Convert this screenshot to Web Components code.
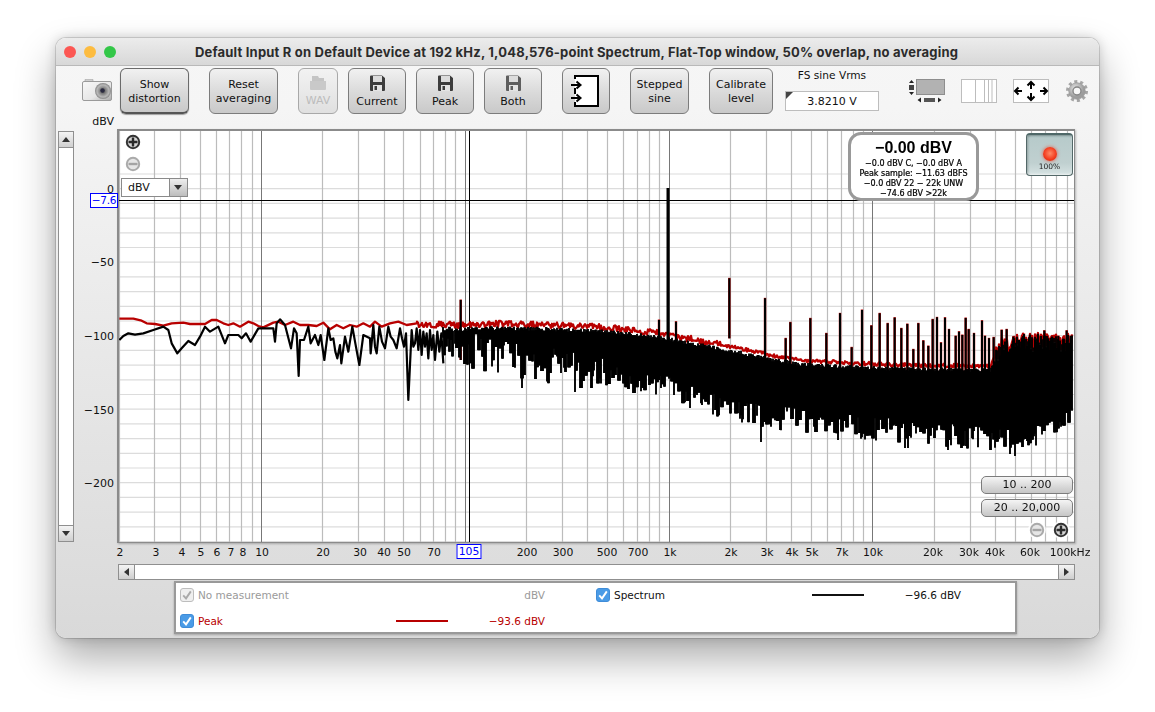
<!DOCTYPE html>
<html lang="en"><head><meta charset="utf-8"><title>Spectrum</title>
<style>
html,body{margin:0;background:#fff}
body{padding:38px 56px 0;height:712px;box-sizing:border-box;overflow:hidden;font-family:"DejaVu Sans",sans-serif;font-size:11px;color:#111}
</style></head><body>
<app-window>
  <title-bar slot="title">Default Input R on Default Device at 192 kHz, 1,048,576-point Spectrum, Flat-Top window, 50% overlap, no averaging</title-bar>
  <tool-bar slot="tools"></tool-bar>
  <main-area slot="main"></main-area>
</app-window>
<script>
function def(name,css,html,init){
  customElements.define(name,class extends HTMLElement{
    connectedCallback(){
      if(this.shadowRoot)return;
      const r=this.attachShadow({mode:'open'});
      r.innerHTML='<style>'+css+'</style>'+(typeof html==='function'?html(this):html);
      if(init)init(r,this);
    }
  });
}
const ICON={
 floppy:c=>`<svg width="15" height="16" viewBox="0 0 15 16"><path d="M0 1.5A1 1 0 0 1 1 .5H12L15 3V15A1 1 0 0 1 14 16H1A1 1 0 0 1 0 15Z" fill="${c}"/><rect x="3" y="1" width="9" height="6" fill="#dcdcdc"/><rect x="3" y="10" width="9" height="6" fill="#e4e4e4"/><rect x="4.5" y="11" width="2.5" height="4" fill="${c}"/></svg>`,
 folder:`<svg width="16" height="15" viewBox="0 0 16 15"><path d="M2 1H8L9 3H14V6H2Z" fill="#c4c4c4"/><path d="M0 6H16V14A1 1 0 0 1 15 15H1A1 1 0 0 1 0 14Z" fill="#c9c9c9"/></svg>`
};
def('title-bar',`:host{display:flex;align-items:center;height:27px;border-bottom:1px solid #b9b9b9;background:linear-gradient(#ececec,#d8d8d8);border-radius:10px 10px 0 0;position:relative}
 .lights{display:flex;gap:8px;padding-left:8px}
 i{display:block;width:12px;height:12px;border-radius:50%}
 .t{flex:1;text-align:center;font:700 13px Inter,sans-serif;letter-spacing:.2px;color:#2b2b2b;padding-right:62px;white-space:nowrap}`,
 `<div class="lights"><i style="background:#fc5753"></i><i style="background:#fdbc40"></i><i style="background:#33c748"></i></div><div class="t"><slot></slot></div>`);

def('app-window',`:host{display:block;width:1043px;height:600px;border-radius:10px;background:linear-gradient(#f6f6f6 0,#f5f5f5 70px,#d9d9d9 100%);box-shadow:0 0 0 1px rgba(0,0,0,.13),0 20px 40px rgba(0,0,0,.33),0 0 12px rgba(0,0,0,.18)}`,`<slot name="title"></slot><slot name="tools"></slot><slot name="main"></slot>`);

def('tool-button',`:host{display:flex;flex:none;flex-direction:column;align-items:center;justify-content:center;box-sizing:border-box;height:46px;padding-top:2px;border:1px solid #7c7c7c;border-radius:6px;background:linear-gradient(#f1f1f1,#d9d9d9 55%,#c9c9c9);text-align:center;line-height:14px;font-size:11px;color:#111}
 :host([primary]){border-color:#6b6b6b;border-bottom:2px solid #555;box-shadow:0 1px 1px rgba(0,0,0,.35)}
 :host([disabled]){color:#bcbcbc;border-color:#a8a8a8;background:linear-gradient(#f2f2f2,#e0e0e0)}
 ::slotted(svg){margin:-1px 0 4px}`,`<slot></slot>`);

def('fs-field',`:host{display:block;width:94px;flex:none;margin-left:12px;text-align:center;font-size:11px}
 .l{height:23px;line-height:14px;box-sizing:border-box;white-space:nowrap;font-size:10.6px}
 .v{position:relative;box-sizing:border-box;height:20px;border:1px solid #bdbdbd;background:#fff;line-height:20px;font-size:11px}
 .v::before{content:"";position:absolute;left:0;top:0;border-style:solid;border-width:7px 7px 0 0;border-color:#444 transparent transparent transparent}`,
 `<div class="l">FS sine Vrms</div><div class="v">3.8210 V</div>`);

def('tool-bar',`:host{display:flex;align-items:flex-start;height:46px;padding-top:2px}
 .s{flex:none}`,
 `<svg class="s" style="margin:11px 0 0 26px" width="30" height="22" viewBox="0 0 30 22">
   <defs><linearGradient id="cb" x1="0" x2="1" y1="0" y2="1"><stop offset="0" stop-color="#f8f8f8"/><stop offset=".6" stop-color="#e6e6e6"/><stop offset="1" stop-color="#a9a9a9"/></linearGradient>
   <radialGradient id="cl"><stop offset="0" stop-color="#333"/><stop offset=".3" stop-color="#777"/><stop offset=".75" stop-color="#b8b8b8"/><stop offset="1" stop-color="#858585"/></radialGradient></defs>
   <rect x="3" y="0" width="8" height="3" rx="1" fill="#cfcfcf" stroke="#9c9c9c" stroke-width=".6"/>
   <rect x=".5" y="2.5" width="29" height="19" rx="1.5" fill="url(#cb)" stroke="#9a9a9a"/>
   <circle cx="21" cy="12" r="8" fill="url(#cl)"/><circle cx="20.5" cy="11.5" r="2.2" fill="#2a2a40"/>
  </svg>
  <tool-button primary style="margin-left:8px;width:69px">Show<br>distortion</tool-button>
  <tool-button style="margin-left:20px;width:69px">Reset<br>averaging</tool-button>
  <tool-button disabled style="margin-left:20px;width:40px">${ICON.folder}WAV</tool-button>
  <tool-button style="margin-left:10px;width:58px">${ICON.floppy('#3d3d3d')}Current</tool-button>
  <tool-button style="margin-left:10px;width:58px">${ICON.floppy('#3d3d3d')}Peak</tool-button>
  <tool-button style="margin-left:10px;width:58px">${ICON.floppy('#5e5e5e')}Both</tool-button>
  <tool-button style="margin-left:20px;width:48px"><svg style="margin:-2px 0 0" width="32" height="32" viewBox="0 0 32 32">
    <path d="M5 4V1H28V31H5V27M5 19V13" fill="#fff" stroke="#000" stroke-width="2"/><rect x="6" y="2" width="21" height="28" fill="#fff"/>
    <path d="M1 10H10M6.5 6.5L10.5 10L6.5 13.5M1 23H10M6.5 19.5L10.5 23L6.5 26.5" fill="none" stroke="#000" stroke-width="2"/></svg></tool-button>
  <tool-button style="margin-left:20px;width:59px">Stepped<br>sine</tool-button>
  <tool-button style="margin-left:20px;width:64px">Calibrate<br>level</tool-button>
  <fs-field></fs-field>
  <svg class="s" style="margin:10px 0 0 29px" width="37" height="26" viewBox="0 0 37 26">
   <rect x="8.5" y="1.5" width="28" height="15" fill="#b2b2b2" stroke="#8e8e8e"/>
   <rect x="1" y="7" width="5" height="5" fill="#444"/><path d="M1 5L3.5 2L6 5ZM1 14L3.5 17L6 14Z" fill="#222"/>
   <rect x="16" y="20" width="11" height="4" fill="#555"/><path d="M13 19.5L9.5 22L13 24.5ZM30 19.5L33.5 22L30 24.5Z" fill="#222"/>
  </svg>
  <svg class="s" style="margin:11px 0 0 16px" width="36" height="24" viewBox="0 0 36 24">
   <rect x=".5" y=".5" width="35" height="23" fill="#fff" stroke="#bdbdbd"/><path d="M14.5 1V23M23.5 1V23M27.5 1V23M31 1V23" stroke="#bdbdbd"/>
  </svg>
  <svg class="s" style="margin:11px 0 0 16px" width="36" height="24" viewBox="0 0 36 24">
   <rect x=".5" y=".5" width="35" height="23" fill="#fff" stroke="#bdbdbd"/>
   <g fill="none" stroke="#000" stroke-width="2"><path d="M2 12H9M5.5 8.5L2 12L5.5 15.5M34 12H27M30.5 8.5L34 12L30.5 15.5M18 3V10M14.5 6.5L18 3L21.5 6.5M18 21V14M14.5 17.5L18 21L21.5 17.5"/></g>
  </svg>
  <svg class="s" style="margin:12px 0 0 17px" width="22" height="22" viewBox="0 0 22 22">
   <defs><radialGradient id="g" cx=".4" cy=".35"><stop offset="0" stop-color="#e8e8e8"/><stop offset="1" stop-color="#9c9c9c"/></radialGradient></defs>
   <circle cx="11" cy="11" r="9.4" fill="none" stroke="#a6a6a6" stroke-width="3.2" stroke-dasharray="3 2.9"/>
   <circle cx="11" cy="11" r="8.3" fill="url(#g)" stroke="#969696" stroke-width=".6"/>
   <circle cx="11" cy="11" r="4" fill="#f7f7f7" stroke="#858585" stroke-width="1.4"/>
  </svg>`);

def('scroll-btn',`:host{display:flex;flex:none;align-items:center;justify-content:center;box-sizing:border-box;background:linear-gradient(#f4f4f4,#cfcfcf)}
 i{display:block;width:0;height:0;border-style:solid}
 :host([dir=up]) i{border-width:0 4.5px 5px;border-color:transparent transparent #333}
 :host([dir=down]) i{border-width:5px 4.5px 0;border-color:#333 transparent transparent}
 :host([dir=left]) i{border-width:4.5px 5px 4.5px 0;border-color:transparent #333 transparent transparent}
 :host([dir=right]) i{border-width:4.5px 0 4.5px 5px;border-color:transparent transparent transparent #333}`,`<i></i>`);

def('v-scroll',`:host{display:flex;flex-direction:column;box-sizing:border-box;width:16px;border:1px solid #8f8f8f;background:#fff;margin:2px 0 1px 2px}
 .t{flex:1;border:solid #8f8f8f;border-width:1px 0}
 scroll-btn{height:15px}`,`<scroll-btn dir="up"></scroll-btn><div class="t"></div><scroll-btn dir="down"></scroll-btn>`);

def('h-scroll',`:host{display:flex;box-sizing:border-box;height:16px;width:957px;margin-left:1px;border:1px solid #8f8f8f;background:#fff}
 .t{flex:1;border:solid #8f8f8f;border-width:0 1px}
 scroll-btn{width:15px}`,`<scroll-btn dir="left"></scroll-btn><div class="t"></div><scroll-btn dir="right"></scroll-btn>`);

/* axis labels are placed along a scale, so their position is the data */
def('y-axis',`:host{display:block;position:relative;font-size:11px}
 span{position:absolute;right:3px;line-height:14px;white-space:nowrap}
 .c{right:-1px;top:64px;width:28px;height:15px;line-height:13px;box-sizing:border-box;border:1px solid #00f;background:#fff;color:#00f;text-align:center;z-index:3;letter-spacing:-.3px;font-size:10.5px}`,
 ()=>[[ '0',190],['−50',263],['−100',337],['−150',411],['−200',484]].map(([t,y])=>`<span style="top:${y-129-7}px">${t}</span>`).join('')+`<span class="c">−7.6</span>`);

const XT=[['2',120],['3',156],['4',182],['5',201],['6',217],['7',231],['8',243],['10',262],['20',323],['30',360],['40',384],['50',404],['70',434],['200',527],['300',563],['500',607],['700',638],['1k',670],['2k',731],['3k',767],['4k',792],['5k',812],['7k',842],['10k',873],['20k',933],['30k',969],['40k',995],['60k',1030],['100kHz',1070]];
def('x-axis',`:host{display:block;position:relative;font-size:10.8px;width:958px}
 span{position:absolute;top:3px;line-height:14px;transform:translateX(-50%);white-space:nowrap}
 .c{top:1px;width:25px;height:15px;box-sizing:border-box;border:1px solid #00f;color:#00f;background:#fff;text-align:center;line-height:13px}`,
 ()=>XT.map(([t,x])=>`<span style="left:${x-117}px">${t}</span>`).join('')+`<span class="c" style="left:${469-117}px">105</span>`);

def('zoom-btn',`:host{display:block;position:absolute;width:18px;height:18px}`,
 h=>{const plus=h.hasAttribute('plus'),dim=h.hasAttribute('dim');
  return `<svg width="18" height="18" viewBox="0 0 18 18"><circle cx="9" cy="9" r="9" fill="#fff" opacity=".85"/><circle cx="9" cy="9" r="6.2" fill="${dim?'#e6e6e6':'#d6d6d6'}" stroke="${dim?'#aaa':'#333'}" stroke-width="2"/><path d="M4.5 9H13.5${plus?'M9 4.5V13.5':''}" stroke="${dim?'#a4a4a4':'#2a2a2a'}" stroke-width="2.4"/></svg>`});

def('range-btn',`:host{display:block;position:absolute;box-sizing:border-box;width:92px;height:18px;border:1px solid #7c7c7c;border-radius:5px;background:linear-gradient(#f5f5f5,#d8d8d8 60%,#c6c6c6);text-align:center;line-height:16px;font-size:11px}`,`<slot></slot>`);

def('unit-combo',`:host{display:flex;position:absolute;box-sizing:border-box;width:67px;height:19px;border:1px solid #8a8a8a;background:#fff;font-size:11px;line-height:17px}
 .t{flex:1;padding-left:6px}
 .a{width:17px;border-left:1px solid #8a8a8a;background:linear-gradient(#eee,#bdbdbd);position:relative}
 .a::after{content:"";position:absolute;left:3.5px;top:6px;border-style:solid;border-width:5px 4.5px 0;border-color:#333 transparent transparent}`,
 `<div class="t">dBV</div><div class="a"></div>`);

def('status-box',`:host{display:block;position:absolute;box-sizing:border-box;width:131px;height:69px;border:3px solid #999;border-radius:13px;background:#fff;text-align:center;color:#000;font-size:8px;line-height:10.1px;-webkit-text-stroke:.22px #000;white-space:nowrap}
 .b{font:700 16px/18px "Liberation Sans",sans-serif;-webkit-text-stroke:0;margin:4px 0 2px}`,
 `<div class="b">−0.00 dBV</div><div>−0.0 dBV C, −0.0 dBV A</div><div>Peak sample: −11.63 dBFS</div><div>−0.0 dBV 22 − 22k UNW</div><div>−74.6 dBV &gt;22k</div>`);

def('led-box',`:host{display:block;position:absolute;box-sizing:border-box;width:47px;height:43px;border:1px solid #536868;border-top:2px solid #4f6868;border-radius:4px;background:linear-gradient(#b6caca,#c0d0d0 70%,#d6e2e2);text-align:center;font-size:7.5px;color:#222;box-shadow:inset 0 -1px 2px rgba(255,255,255,.6),inset 1px 1px 2px rgba(60,80,80,.5)}
 i{display:block;width:14px;height:14px;border-radius:50%;margin:12px auto 1px;background:radial-gradient(circle at 50% 45%,#ff8a66,#f2391b 60%,#c9240f);box-shadow:0 0 3px 1px rgba(230,90,70,.55)}
 div{line-height:9px}`,`<i></i><div>100%</div>`);

function mulberry(a){return()=>{a|=0;a=a+0x6D2B79F5|0;let t=Math.imul(a^a>>>15,1|a);t=t+Math.imul(t^t>>>7,61|t)^t;return((t^t>>>14)>>>0)/4294967296}}
function lerp(A,x){if(x<=A[0][0])return A[0][1];for(let i=1;i<A.length;i++){if(x<=A[i][0]){const[a,b]=A[i-1],[c,d]=A[i];return b+(d-b)*(x-a)/(c-a)}}return A[A.length-1][1]}

function drawPlot(cv){
  const g=cv.getContext('2d');
  g.fillStyle='#fff';g.fillRect(0,0,955,411);
  g.save();g.translate(-119,-131);
  const X=f=>261+(Math.log10(f)-1)*203.8;
  g.strokeStyle='#dcdcdc';g.lineWidth=1.2;
  for(let d=10;d>=-240;d-=10){const y=188.7-d*1.47;g.beginPath();g.moveTo(119,y);g.lineTo(1075,y);g.stroke()}
  for(const dec of [1,10,100,1000,10000]){
    for(let m=1;m<10;m++){
      const f=dec*m;if(f<2)continue;const x=Math.round(X(f))+.5;
      g.strokeStyle=m===1&&dec>1?'#777':'#bcbcbc';
      g.lineWidth=m===1&&dec>1?1:1.2;
      g.beginPath();g.moveTo(x,130);g.lineTo(x,543);g.stroke();
    }
  }
  g.strokeStyle='#000';g.lineWidth=1;
  g.beginPath();g.moveTo(469.5,130);g.lineTo(469.5,543);g.moveTo(119,200.5);g.lineTo(1075,200.5);g.stroke();

  const rnd=mulberry(105);
  const redLow=[[58,116],[100,116],[125,122],[140,130],[165,132],[190,137],[215,130],[250,128],[270,132],[300,132],[315,132],[335,120],[350,120],[370,130],[385,135],[400,130],[420,140],[445,125],[460,130],[475,138],[490,142],[520,128],[535,125],[555,135],[580,125],[600,135],[625,135],[650,138],[670,128],[690,148],[710,135],[730,145],[750,135],[770,140],[790,130],[810,140],[825,125],[845,140],[870,130],[895,125],[920,135],[950,130]].map(([x,y])=>[100+x/3,280+y/3]);
  const redEnv=[[416,324],[460,325],[500,324],[550,325],[600,327],[650,332],[680,337],[733,347],[770,355],[800,360],[850,363],[900,365],[990,366],[1002,344],[1030,342],[1073,341]];
  g.lineJoin='round';g.lineCap='butt';
  g.strokeStyle='#b80000';g.lineWidth=2.3;
  g.beginPath();
  redLow.forEach((p,i)=>i?g.lineTo(p[0],p[1]):g.moveTo(p[0],p[1]));
  const redAt={};
  for(let x=417;x<=1072;x+=1){
    const amp=x>995?9:x>720?1.8:3.2;
    const v=lerp(redEnv,x)+(rnd()-.5)*2*amp;
    redAt[x]=v;
    g.lineTo(x,v);
  }
  g.stroke();
  const z=[[177,180],[228,185],[388,55],[495,115],[557,235],[571,187],[631,175],[679,220],[720,160],[755,262],[786,150],[814,197],[839,160],[863,190],[884,173],[904,205],[922,192],[940,268],[955,190],[970,242],[985,258],[998,178],[1011,172],[1023,248],[1035,173],[1047,208],[1067,228],[1077,215],[1087,225],[1097,174],[1106,208],[1122,220],[1146,182],[1155,228],[1167,235],[1181,232],[1205,210],[1220,208],[1240,230],[1257,240],[1272,222],[1287,232],[1305,240],[1333,212],[1345,235],[1357,232],[1375,228],[1400,212],[1412,228]];
  const spikes=z.map(([a,b])=>[600+a/3,260+b/3]);spikes.unshift([460.7,300]);
  g.strokeStyle='#b80000';g.lineWidth=2.4;
  for(const[x,y]of spikes){g.beginPath();g.moveTo(x,y-.5);g.lineTo(x,y+60);g.stroke()}
  const low=[[58,180],[70,168],[85,160],[105,164],[130,160],[160,150],[190,140],[205,150],[215,190],[232,220],[245,205],[265,183],[285,195],[300,170],[315,140],[330,155],[355,140],[375,190],[385,165],[415,165],[425,175],[438,160],[452,185],[475,145],[520,145],[525,185],[530,130],[540,118],[555,135],[573,205],[582,145],[590,160],[596,288],[600,180],[612,180],[625,140],[632,190],[645,165],[655,195],[662,165],[673,240],[685,145],[692,180],[700,175],[706,215],[712,235],[720,195],[724,250],[735,170],[745,215],[757,140],[766,190],[778,255],[790,165],[810,175],[812,220],[820,135],[825,200],[830,220],[838,140],[846,185],[855,205],[865,140],[872,170],[880,180],[890,205],[900,145],[906,175],[912,200],[918,160],[925,360],[935,150],[940,200],[945,190],[950,145],[955,210],[960,150],[965,225],[970,155],[975,200],[980,160],[985,235],[990,150],[995,210],[1000,165],[1005,240],[1012,155],[1018,215],[1024,160],[1030,250]].map(([x,y])=>[100+x/3,280+y/3]);
  g.strokeStyle='#000';g.lineWidth=2.2;g.beginPath();
  low.forEach((p,i)=>i?g.lineTo(p[0],p[1]):g.moveTo(p[0],p[1]));g.stroke();
  const bot=[[443,358],[480,372],[540,382],[600,392],[660,398],[700,412],[750,426],[800,433],[900,443],[1000,453],[1020,456],[1050,444],[1072,428]];
  g.lineWidth=1.9;
  let hold=0,bv=0;
  for(let x=443;x<=1072;x+=1){
    if(hold--<=0){hold=Math.floor(rnd()*3);
      const span=x<620?36:24,r=rnd();
      bv=lerp(bot,x)-Math.pow(r,1.1)*span;
    }
    const t=(x>995?redAt[x]+.5+rnd()*2:lerp(redEnv,x)+2+rnd()*4);
    g.beginPath();g.moveTo(x,t);g.lineTo(x,bv);g.stroke();
  }
  for(const[x,y]of[[761,442],[690,408],[948,450],[1010,454],[1015,456],[905,448],[908,448],[522,388],[575,392],[838,440]]){
    g.beginPath();g.moveTo(x,y-60);g.lineTo(x,y);g.stroke();
  }
  g.lineWidth=2;
  for(const[x,y]of spikes){g.beginPath();g.moveTo(x,y);g.lineTo(x,y+60);g.stroke()}
  g.lineWidth=3;g.beginPath();g.moveTo(668,188);g.lineTo(668,345);g.stroke();
  g.restore();
}

def('plot-view',`:host{display:block;position:relative;box-sizing:border-box;width:958px;height:414px;border:solid #8b8b8b;border-width:2px 1px 1px 2px;box-shadow:1px 1px 2px rgba(0,0,0,.25);background:#fff}
 canvas{display:block}`,
 `<canvas width="955" height="411"></canvas>
  <zoom-btn plus style="left:4.5px;top:2px"></zoom-btn>
  <zoom-btn dim style="left:4.5px;top:24px"></zoom-btn>
  <unit-combo style="left:2px;top:47px"></unit-combo>
  <status-box style="left:729px;top:1px"></status-box>
  <led-box style="left:907px;top:2px"></led-box>
  <range-btn style="left:862px;top:345px">10 .. 200</range-btn>
  <range-btn style="left:862px;top:368px">20 .. 20,000</range-btn>
  <zoom-btn dim style="left:909px;top:390px"></zoom-btn>
  <zoom-btn plus style="left:933px;top:390px"></zoom-btn>`,
 r=>drawPlot(r.querySelector('canvas')));

def('check-box',`:host{display:block;flex:none;width:14px;height:14px}`,
 h=>{const d=h.hasAttribute('dim');return `<svg width="14" height="14" viewBox="0 0 14 14"><rect x=".5" y=".5" width="13" height="13" rx="2.5" fill="${d?'#efefef':'#4a9be6'}" stroke="${d?'#bdbdbd':'#3f8cd8'}"/><path d="M3.2 7.4L6 10.4L10.8 3.4" fill="none" stroke="${d?'#aaa':'#fff'}" stroke-width="1.9"/></svg>`});

def('legend-row',`:host{display:flex;align-items:center;height:24px;font-size:10.5px}
 .n{flex:1;padding-left:4px;white-space:nowrap}
 .l{width:52px;height:2px}
 .v{width:97px;text-align:right;white-space:nowrap}`,
 h=>{const c=h.getAttribute('color'),dim=h.hasAttribute('dim');
  return `<check-box ${dim?'dim':''}></check-box><div class="n" style="color:${c}">${h.getAttribute('name')}</div><div class="l" style="background:${dim?'transparent':c}"></div><div class="v" style="color:${c}">${h.getAttribute('value')}</div>`});

def('legend-panel',`:host{display:grid;box-sizing:border-box;width:843px;height:53px;margin:1px 0 0 1px;grid-template-columns:365px 365px;column-gap:51px;row-gap:2px;align-content:start;padding-left:4px;background:#fff;border:2px solid #999;box-shadow:0 1px 2px rgba(0,0,0,.25)}`,
 `<legend-row name="No measurement" value="dBV" color="#9a9a9a" dim></legend-row>
  <legend-row name="Spectrum" value="−96.6 dBV" color="#111"></legend-row>
  <legend-row name="Peak" value="−93.6 dBV" color="#b80000"></legend-row>`);

def('main-area',`:host{display:grid;grid-template-columns:18px 43px 958px 1fr;grid-template-rows:15px 414px 21px 16px 56px}
 .u{grid-column:2;grid-row:1;text-align:right;padding-right:3px;line-height:14px;font-size:11px;margin-top:1px}
 v-scroll{grid-column:1;grid-row:2}
 y-axis{grid-column:2;grid-row:2}
 plot-view{grid-column:3;grid-row:2}
 x-axis{grid-column:3;grid-row:3}
 h-scroll{grid-column:3;grid-row:4}
 legend-panel{grid-column:3;grid-row:5;justify-self:start;margin-left:57px}`,
 `<div class="u">dBV</div><v-scroll></v-scroll><y-axis></y-axis><plot-view></plot-view><x-axis></x-axis><h-scroll></h-scroll><legend-panel></legend-panel>`);
</script>
</body></html>
